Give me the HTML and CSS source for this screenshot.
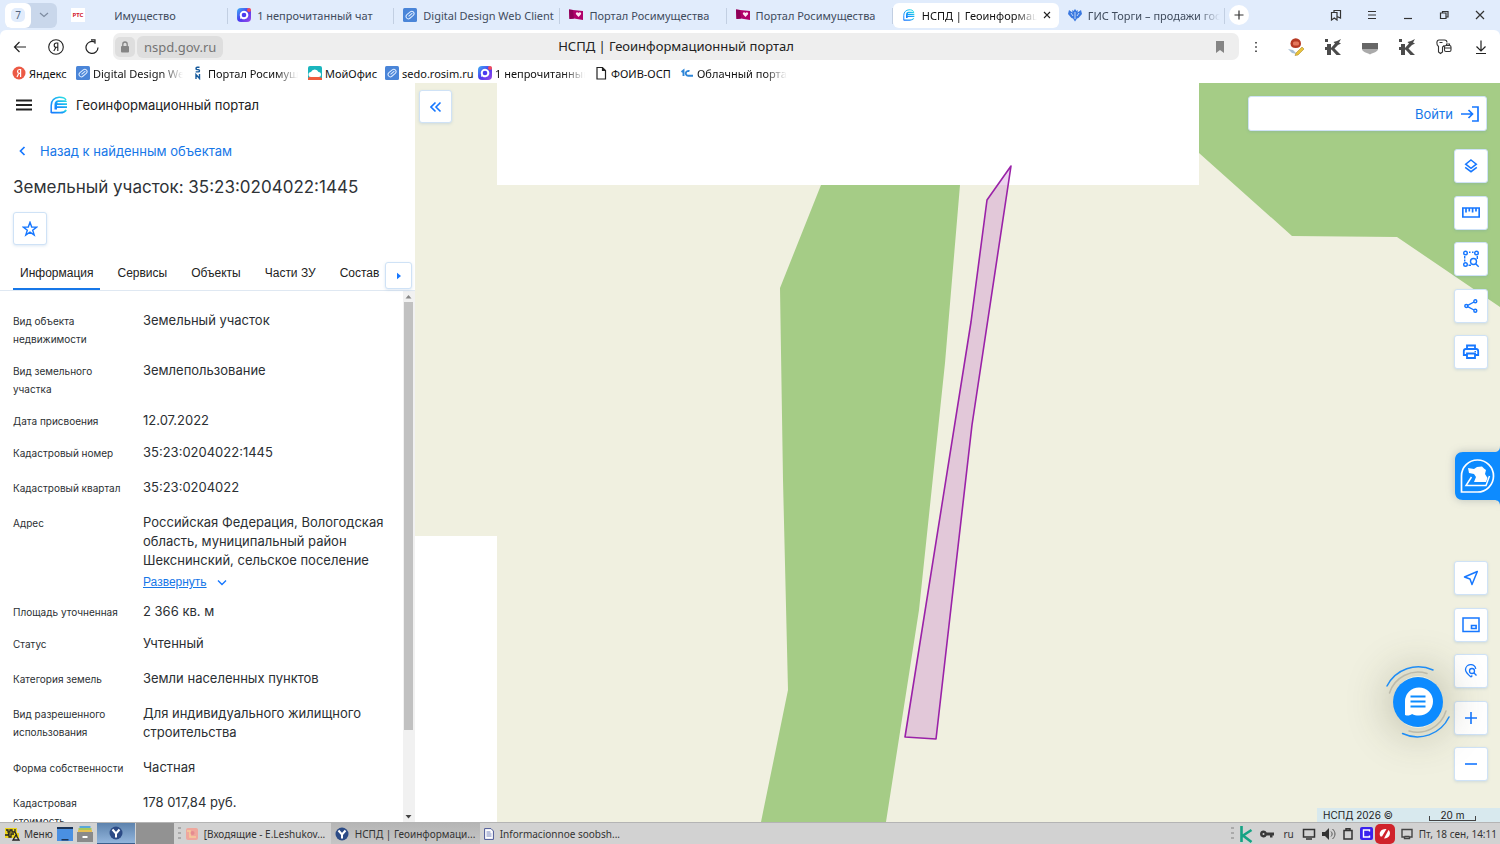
FILE: index.html
```html
<!DOCTYPE html>
<html lang="ru">
<head>
<meta charset="utf-8">
<title>НСПД | Геоинформационный портал</title>
<link rel="stylesheet" href="styles.css">
</head>
<body>
<svg class="defs" aria-hidden="true">
  <defs>
    <linearGradient id="cyan" x1="0" y1="1" x2="1" y2="0"><stop offset="0" stop-color="#1677ff"/><stop offset=".55" stop-color="#17a9f5"/><stop offset="1" stop-color="#2fe6e0"/></linearGradient>
    <linearGradient id="violet" x1="0" y1="0" x2="1" y2="1"><stop offset="0" stop-color="#3cb4f5"/><stop offset=".5" stop-color="#4a3bf0"/><stop offset="1" stop-color="#a04ae8"/></linearGradient>
    <symbol id="nspd" viewBox="0 0 18 18"><path d="M1.200 17V9.500C1.200 4.500 4.500 1.500 9 1.200c4-.2 6 1 7 2.800" fill="none" stroke="url(#cyan)" stroke-width="1.500"/><path d="M1.200 16.700h9c3 0 5-1 6-2.700" fill="none" stroke="url(#cyan)" stroke-width="1.700"/><path d="M4.500 13.500V8.500C4.500 6 6 4.300 8.500 4.300h7.500l1 1.700H7.500v1.200H17v1.800H7v1.200h10v1.800H7v1.500z" fill="url(#cyan)"/></symbol>
    <symbol id="clip" viewBox="0 0 14 14"><rect width="14" height="14" rx="1.500" fill="#4a85d8"/><g transform="rotate(-40 7 7)" fill="none" stroke="#dcebff" stroke-width="1"><rect x="2.500" y="4.800" width="9" height="4.600" rx="2.300"/><path d="M5 7.100h5"/></g></symbol>
    <symbol id="chat" viewBox="0 0 14 14"><rect width="14" height="14" rx="4" fill="url(#violet)"/><path d="M7 2.700a4.300 4.300 0 1 1-2.600 7.700L3 10.800l.2-2A4.300 4.300 0 0 1 7 2.700z" fill="#fff"/><circle cx="7" cy="7" r="2.300" fill="#4a3bf0"/><circle cx="12" cy="2" r="2" fill="#f04a5c"/></symbol>
    <symbol id="rosim" viewBox="0 0 14 14"><path d="M0 1.500l4 .5 10 1v9L5 10.500l-4.500.5z" fill="#b0006a"/><path d="M0 1.500l4 .5 1 8.500-4.500.5z" fill="#8e0057"/><path d="M9.500 9L7 6.300c-.8-1.500 1.300-2.800 2.500-1.200 1.200-1.600 3.300-.3 2.500 1.200z" fill="#ffe6f3"/></symbol>
    <symbol id="kasp" viewBox="0 0 18 18"><path d="M1 1h3v3H1zM3 6h4v4l4-4.500L9.500 4 13 3l4-2-2 3.500 2 1-3 1.500-3.500 3.500L17 17h-4.500L7.500 11.500 7 12v5H3v-5H1V9h2z" fill="#4b4b4b"/></symbol>
    <symbol id="ybird" viewBox="0 0 14 14"><circle cx="7" cy="7" r="6.500" fill="#2c4b86"/><path d="M3.500 3.500L7 7.500v4M10.500 3.500L7 7.500" fill="none" stroke="#fff" stroke-width="2"/></symbol>
  </defs>
</svg>

<header class="browser">
  <div class="tabstrip">
    <div class="group">
      <button class="group-count"><span>7</span></button>
      <button class="group-menu" aria-label="Список вкладок"><svg width="12" height="8" viewBox="0 0 12 8"><path d="M2 2l4 3.500L10 2" fill="none" stroke="#7d8ba0" stroke-width="1.200"/></svg></button>
    </div>
    <div class="tabs">
      <button class="tab"><span class="rts">РТС</span><span class="tab-text">Имущество</span></button>
      <button class="tab"><svg class="fav"><use href="#chat"/></svg><span class="tab-text">1 непрочитанный чат</span></button>
      <button class="tab"><svg class="fav"><use href="#clip"/></svg><span class="tab-text">Digital Design Web Client</span></button>
      <button class="tab"><svg class="fav"><use href="#rosim"/></svg><span class="tab-text">Портал Росимущества</span></button>
      <button class="tab"><svg class="fav"><use href="#rosim"/></svg><span class="tab-text">Портал Росимущества</span></button>
      <button class="tab active"><svg class="fav small"><use href="#nspd"/></svg><span class="tab-text fade">НСПД | Геоинформаци</span><svg width="8" height="8" viewBox="0 0 8 8"><path d="M1 1l6 6M7 1L1 7" stroke="#222" stroke-width="1.100"/></svg></button>
      <button class="tab"><svg class="fav" viewBox="0 0 14 14"><path d="M7 1l1.500 2L10 2l-.5 2.500L13 2l1 4-3.500 4-1.500.5L7 13.500 5 10.500 3.500 10 0 6l1-4 3.500 2.500L4 2l1.500 1z" fill="#3a78e0"/><path d="M7 4v7M3 5l2 3M11 5L9 8" stroke="#e3edfd" stroke-width=".8"/></svg><span class="tab-text fade">ГИС Торги – продажи гос</span></button>
    </div>
    <button class="plus" aria-label="Новая вкладка"><svg width="10" height="10" viewBox="0 0 10 10"><path d="M5 .5v9M.5 5h9" stroke="#333" stroke-width="1.200"/></svg></button>
    <div class="window-buttons">
      <button aria-label="Коллекции"><svg width="12" height="12" viewBox="0 0 12 12"><path d="M1.500 3.500h5.500v7.500L4.300 9 1.500 11zM4 3.500V1.500h6.500V9L7 7.500" fill="none" stroke="#333" stroke-width="1.200"/></svg></button>
      <button aria-label="Меню"><svg width="12" height="12" viewBox="0 0 12 12"><path d="M2 2.500h8M2 6h8M2 9.500h8" stroke="#333" stroke-width="1.200"/></svg></button>
      <button aria-label="Свернуть"><svg width="12" height="12" viewBox="0 0 12 12"><path d="M2 9.500h8" stroke="#333" stroke-width="1.200"/></svg></button>
      <button aria-label="Развернуть окно"><svg width="12" height="12" viewBox="0 0 12 12"><path d="M2.500 4h5.500v5.500H2.500zM4.500 4V2.500h5.500V8H8" fill="none" stroke="#333" stroke-width="1.200"/></svg></button>
      <button aria-label="Закрыть"><svg width="12" height="12" viewBox="0 0 12 12"><path d="M2 2l8 8M10 2l-8 8" stroke="#333" stroke-width="1.200"/></svg></button>
    </div>
  </div>

  <div class="navbar">
    <button class="nav" aria-label="Назад"><svg width="14" height="14" viewBox="0 0 14 14"><path d="M13 7H1.500M6.500 2l-5 5 5 5" fill="none" stroke="#222" stroke-width="1.200"/></svg></button>
    <button class="nav" aria-label="Яндекс"><svg width="16" height="16" viewBox="0 0 16 16"><g fill="none" stroke="#222" stroke-width="1.100"><circle cx="8" cy="8" r="7.300"/><path d="M9.800 12V4H8.300C5.500 4 5.500 8.300 8.300 8.300h1.500M8 8.300L5.800 12"/></g></svg></button>
    <button class="nav" aria-label="Обновить"><svg width="14" height="16" viewBox="0 0 14 16"><path d="M13 8.500A6 6 0 1 1 9.500 3M6 .8h4v4" fill="none" stroke="#222" stroke-width="1.200"/></svg></button>
    <div class="address">
      <span class="lock"><svg width="10" height="12" viewBox="0 0 10 12"><rect x="1" y="5" width="8" height="6.500" rx="1" fill="#858585"/><path d="M2.800 5V3.200a2.200 2.200 0 0 1 4.400 0V5" fill="none" stroke="#858585" stroke-width="1.300"/></svg></span>
      <span class="domain">nspd.gov.ru</span>
      <span class="page-title">НСПД | Геоинформационный портал</span>
      <svg class="mark" width="10" height="12" viewBox="0 0 10 12"><path d="M1 0h8v12L5 9l-4 3z" fill="#858585"/></svg>
    </div>
    <button class="dots" aria-label="Ещё"><svg width="4" height="12" viewBox="0 0 4 12"><path d="M1.200 1h1.600v1.600H1.200zM1.200 5.200h1.600v1.600H1.200zM1.200 9.400h1.600V11H1.200z" fill="#333"/></svg></button>
    <div class="extensions">
      <button aria-label="Подпись"><svg width="18" height="18" viewBox="0 0 18 18"><path d="M3.500 5.500a5 5 0 0 1 10.500 0c0 3-2 4.500-5.300 4.500S3.500 8.500 3.500 5.500z" fill="#b63a24"/><rect x="6" y="3.500" width="6" height="4" rx="1.500" fill="#e4775c"/><path d="M1 11l5 1 4 4-5-1z" fill="#a8bfd4"/><path d="M9 15l6-6 2 2-6 6-3 .5z" fill="#e9c33c" stroke="#a07a18" stroke-width=".5"/></svg></button>
      <button aria-label="Расширение"><svg width="18" height="18"><use href="#kasp"/></svg></button>
      <button aria-label="Щит"><svg width="18" height="18" viewBox="0 0 18 18"><path d="M1 5h16v6H1z" fill="#666"/><path d="M1 11h16c0 3-5 3.500-8 5.500C6 14.500 1 14 1 11z" fill="#aaa"/></svg></button>
      <button aria-label="Расширение 2"><svg width="18" height="18"><use href="#kasp"/></svg></button>
      <button aria-label="Пароли"><svg width="18" height="18" viewBox="0 0 18 18"><g fill="none" stroke="#333" stroke-width="1.100"><path d="M9.500 2H4C1.500 2 1 6.500 3.500 8.500v5.500l2 1.500 2-1.500V9c1-.5 1.500-1 1.800-1.800M9.500 2c2 0 2.500 1.500 2.500 2.500M4.500 4.500h3"/><rect x="9.500" y="7.500" width="6.500" height="6" rx="1.500"/><path d="M9.500 10H16M11.500 7.500V6h3v1.500"/></g></svg></button>
      <button aria-label="Загрузки"><svg width="18" height="18" viewBox="0 0 18 18"><path d="M9 2.500v10M4.500 8.500L9 13l4.500-4.500M4 15.500h10" fill="none" stroke="#222" stroke-width="1.200"/></svg></button>
    </div>
  </div>

  <nav class="bookmarks">
    <a href="#" class="bm b1"><svg class="fav" viewBox="0 0 14 14"><circle cx="7" cy="7" r="6.500" fill="#ec5a45"/><path d="M8.600 11V3.500H7.300C5 3.500 5 7.300 7.300 7.300h1.300M6.800 7.300L5 11" fill="none" stroke="#fff" stroke-width="1.200"/></svg><span>Яндекс</span></a>
    <a href="#" class="bm b2"><svg class="fav"><use href="#clip"/></svg><span class="fade">Digital Design Web</span></a>
    <a href="#" class="bm b3"><svg class="fav" viewBox="0 0 14 14"><path d="M8.500 1.300H6.200c-1.600 0-1.600 2.300 0 2.300h1.100c1.600 0 1.600 2.300 0 2.300H4.700M5 13V8.500l3.500 4V8" fill="none" stroke="#165a9c" stroke-width="1.400"/></svg><span class="fade">Портал Росимущ</span></a>
    <a href="#" class="bm b4"><svg class="fav" viewBox="0 0 14 14"><rect width="14" height="14" rx="2" fill="#1ab5bd"/><path d="M0 12l5-4 9 4v2H0z" fill="#ef5b3d"/><path d="M3 11a2.500 2.500 0 0 1 0-5 4 4 0 0 1 7.500 0 2.500 2.500 0 0 1 0 5z" fill="#fff"/></svg><span>МойОфис</span></a>
    <a href="#" class="bm b5"><svg class="fav"><use href="#clip"/></svg><span>sedo.rosim.ru</span></a>
    <a href="#" class="bm b6"><svg class="fav"><use href="#chat"/></svg><span class="fade">1 непрочитанный</span></a>
    <a href="#" class="bm b7"><svg class="fav" viewBox="0 0 14 14"><path d="M3 1.500h5.500l3 3V13H3zM8.500 1.500v3h3" fill="none" stroke="#222" stroke-width="1.200"/></svg><span>ФОИВ-ОСП</span></a>
    <a href="#" class="bm b8"><svg class="fav" viewBox="0 0 14 14"><path d="M1.500 6l2-1.500V10M9.500 5.200a2.600 2.400 0 1 0-.5 4.500h4" fill="none" stroke="#2f86d8" stroke-width="1.900"/></svg><span class="fade">Облачный портал</span></a>
  </nav>
</header>

<main class="app">
  <aside class="panel">
    <div class="brand">
      <button class="burger" aria-label="Меню портала"><svg width="16" height="12" viewBox="0 0 16 12"><path d="M0 1.500h16M0 6h16M0 10.500h16" stroke="#222" stroke-width="1.800"/></svg></button>
      <svg width="18" height="18"><use href="#nspd"/></svg>
      <span>Геоинформационный портал</span>
    </div>
    <a href="#" class="back"><svg width="7" height="10" viewBox="0 0 7 10"><path d="M5.500 1l-4 4 4 4" fill="none" stroke="#1677ff" stroke-width="1.700"/></svg><span>Назад к найденным объектам</span></a>
    <h1>Земельный участок: 35:23:0204022:1445</h1>
    <button class="box star" aria-label="В избранное"><svg width="16" height="16" viewBox="0 0 16 16"><path d="M8 1.300l1.700 4.700 5 .1-4 3.100 1.500 4.900L8 11.200l-4.200 2.900 1.500-4.900-4-3.100 5-.1z" fill="none" stroke="#1677ff" stroke-width="1.400"/></svg></button>
    <div class="sections">
      <button class="section current">Информация</button>
      <button class="section">Сервисы</button>
      <button class="section">Объекты</button>
      <button class="section">Части ЗУ</button>
      <button class="section">Состав</button>
      <button class="box next" aria-label="Далее"><svg width="6" height="8" viewBox="0 0 6 8"><path d="M1 .8v6.400L5 4z" fill="#1677ff"/></svg></button>
    </div>
    <div class="content">
      <dl class="facts">
        <div class="row"><dt>Вид объекта недвижимости</dt><dd>Земельный участок</dd></div>
        <div class="row"><dt>Вид земельного участка</dt><dd>Землепользование</dd></div>
        <div class="row"><dt>Дата присвоения</dt><dd>12.07.2022</dd></div>
        <div class="row roomy"><dt>Кадастровый номер</dt><dd>35:23:0204022:1445</dd></div>
        <div class="row roomy"><dt>Кадастровый квартал</dt><dd>35:23:0204022</dd></div>
        <div class="row roomy"><dt>Адрес</dt><dd>Российская Федерация, Вологодская область, муниципальный район Шекснинский, сельское поселение<a href="#" class="expand"><span>Развернуть</span><svg width="10" height="7" viewBox="0 0 10 7"><path d="M1 1.500l4 4 4-4" fill="none" stroke="#1677ff" stroke-width="1.400"/></svg></a></dd></div>
        <div class="row"><dt>Площадь уточненная</dt><dd>2 366 кв. м</dd></div>
        <div class="row roomy"><dt>Статус</dt><dd>Учтенный</dd></div>
        <div class="row roomy"><dt>Категория земель</dt><dd>Земли населенных пунктов</dd></div>
        <div class="row roomy"><dt>Вид разрешенного использования</dt><dd>Для индивидуального жилищного строительства</dd></div>
        <div class="row roomy"><dt>Форма собственности</dt><dd>Частная</dd></div>
        <div class="row roomy"><dt>Кадастровая стоимость</dt><dd>178 017,84 руб.</dd></div>
      </dl>
      <div class="scroll" aria-hidden="true">
        <svg width="11" height="11" viewBox="0 0 11 11"><path d="M5.500 4L8.500 7.500h-6z" fill="#888"/></svg>
        <div class="track"><div class="thumb"></div></div>
        <svg width="11" height="11" viewBox="0 0 11 11"><path d="M5.500 7.500L8.500 4h-6z" fill="#444"/></svg>
      </div>
    </div>
  </aside>

  <section class="map">
    <svg class="ground" viewBox="415 83 1085 739" preserveAspectRatio="xMidYMid slice">
      <path d="M415 83h1085v739H415z" fill="#f0f0e0"/>
      <path d="M497 83h702v102H497zM415 536h82v286h-82z" fill="#fff"/>
      <path d="M1199 83h301v224L1397 237l-105-1-93-83zM821 185h139l-15 178-26 247-33 212H761l27-132-5-210-3-192z" fill="#a5cc86"/>
      <path d="M1011 166l-24 34-16 122-66 415 31 2 16-140 20-174z" fill="#c060c8" fill-opacity=".28" stroke="#9a22a8" stroke-width="1.600" stroke-linejoin="round"/>
    </svg>
    <button class="box collapse" aria-label="Скрыть панель"><svg width="12" height="12" viewBox="0 0 12 12"><path d="M5.500 1.500L1 6l4.500 4.500M10.500 1.500L6 6l4.500 4.500" fill="none" stroke="#1677ff" stroke-width="1.600"/></svg></button>
    <button class="box login"><span>Войти</span><svg width="18" height="16" viewBox="0 0 18 16"><path d="M11 1h6v14h-6M0 8h11M7.500 4L11.500 8l-4 4" fill="none" stroke="#1677ff" stroke-width="1.700"/></svg></button>
    <div class="tools top">
      <button class="box" aria-label="Слои"><svg width="14" height="14" viewBox="0 0 14 14"><path d="M7 1l5.300 4.200L7 9.300 1.700 5.200zM1.200 8.300L7 12.700l5.800-4.400" fill="none" stroke="#1677ff" stroke-width="1.500"/></svg></button>
      <button class="box" aria-label="Измерения"><svg width="18" height="11" viewBox="0 0 18 11"><path d="M.8 1h16.400v9H.8zM4 1v4.500M7.300 1v3.500M10.600 1v4.500M14 1v3.500" fill="none" stroke="#1677ff" stroke-width="1.700"/></svg></button>
      <button class="box" aria-label="Поиск в области"><svg width="18" height="18" viewBox="0 0 18 18"><g fill="none" stroke="#1677ff" stroke-width="1.400"><circle cx="3.500" cy="3" r="1.800"/><circle cx="14.500" cy="3" r="1.800"/><circle cx="3.500" cy="14.500" r="1.800"/><circle cx="11.500" cy="11.500" r="3"/><path d="M13.700 13.700l3 3M2.700 6v2.500M2.700 9.500v2M7 2.200h1.500M10 2.200h1.500M15.300 6v3M6.500 15.300H9"/></g></svg></button>
      <button class="box" aria-label="Поделиться"><svg width="14" height="14" viewBox="0 0 14 14"><g fill="none" stroke="#1677ff" stroke-width="1.400"><circle cx="2.300" cy="7" r="1.500"/><circle cx="11.300" cy="2.300" r="1.500"/><circle cx="11.300" cy="11.700" r="1.500"/><path d="M3.700 6.300L10 3M3.700 7.700L10 11"/></g></svg></button>
      <button class="box" aria-label="Печать"><svg width="18" height="18" viewBox="0 0 18 18"><path d="M5 6V2.500h8V6M5 12H1.800V8.200c0-1.300.7-2.200 2.200-2.200h10c1.500 0 2.200.9 2.200 2.200V12H13M5 10.500h8V15H5z" fill="none" stroke="#1677ff" stroke-width="1.800"/><path d="M12.500 8.500H14" stroke="#1677ff"/></svg></button>
    </div>
    <button class="helper" aria-label="Помощник">
      <svg width="46" height="60" viewBox="0 0 46 60"><path d="M46 0v60c0-4-2-6-6-6H9c-5 0-8-3-8-8V14c0-5 3-8 8-8h31c4 0 6-2 6-6z" fill="#0d8bff"/><path d="M7.500 46V30A16 16 0 1 1 23.500 46z" fill="none" stroke="#fff" stroke-width="1.700"/><path d="M14 22l6 1 3-2 5-.5 2 2 2 1.500-1 4 2.500 4-1.500 4h-12l2-5-2-3-5-1z" fill="#fff"/><path d="M17.500 31l-5.500 8.500h20L35.500 30" fill="none" stroke="#fff" stroke-width="1.500"/></svg>
    </button>
    <div class="tools bottom">
      <button class="box" aria-label="Моё местоположение"><svg width="16" height="16" viewBox="0 0 16 16"><path d="M14.300 1.500L1.500 7l5.500 2 2 5.500z" fill="none" stroke="#1677ff" stroke-width="1.500" stroke-linejoin="round"/></svg></button>
      <button class="box" aria-label="Обзорная карта"><svg width="18" height="16" viewBox="0 0 18 16"><path d="M1 1h16v13.500H1z" fill="none" stroke="#1677ff" stroke-width="1.500"/><path d="M9.500 8.500h4.600v3H9.500z" fill="none" stroke="#1677ff" stroke-width="1.600"/></svg></button>
      <button class="box" aria-label="Поиск места"><svg width="14" height="14" viewBox="0 0 14 14"><g fill="none" stroke="#1677ff" stroke-width="1.300"><path d="M7 13C4 10.500 1.500 8 1.500 5.800a5.200 5.200 0 0 1 10.300-1M7 13l1.300-1.500"/><circle cx="8" cy="7" r="2.500"/><path d="M9.800 8.800l2.700 2.700"/></g></svg></button>
      <button class="box" aria-label="Приблизить"><svg width="12" height="12" viewBox="0 0 12 12"><path d="M6 0v12M0 6h12" stroke="#1677ff" stroke-width="1.600"/></svg></button>
      <button class="box" aria-label="Отдалить"><svg width="12" height="12" viewBox="0 0 12 12"><path d="M0 6h12" stroke="#1677ff" stroke-width="1.600"/></svg></button>
    </div>
    <button class="support" aria-label="Чат поддержки">
      <svg width="72" height="76" viewBox="0 0 72 76"><circle cx="36" cy="38" r="25" fill="#0d8bff"/><path d="M23 51V37.500A14 14 0 1 1 37 51.500c-3 0-5-.5-7-1.500-2 1.500-4 2-7 1z" fill="#fff"/><path d="M28.500 32.500h15M28.500 37.500h15M28.500 42.500h15" stroke="#0d8bff" stroke-width="1.800"/><g fill="none" stroke-width="1.500" stroke-linecap="round"><path d="M5 22A35 35 0 0 1 51 6M67 53A35 35 0 0 1 20.500 69.500" stroke="#1f8df5"/><path d="M7.500 29A30 30 0 0 1 45 9.500M64 47A30 30 0 0 1 27 67" stroke="#bdbbab"/></g></svg>
    </button>
    <div class="credits"><span>НСПД 2026 ©</span><span class="scale">20 m</span></div>
  </section>
</main>

<footer class="taskbar">
  <button class="menu"><svg width="16" height="14" viewBox="0 0 16 14"><path d="M1 1h12v5h2v5H1z" fill="#ecd51c"/><path d="M2 3h2v2h2V3h2v2h3V2M1 8h3l1-2v4h2V7h3M9 13l3-5 3 5zM11 5l2 4" fill="none" stroke="#222" stroke-width="1.300"/></svg><span>Меню</span></button>
  <button class="launch" aria-label="Рабочий стол"><svg width="16" height="14" viewBox="0 0 16 14"><path d="M0 0h16v14H0z" fill="#4a90e2"/><path d="M0 0h16v2H0zM4.500 12h7v1.500h-7z" fill="#1d3557"/></svg></button>
  <button class="launch" aria-label="Файлы"><svg width="16" height="16" viewBox="0 0 16 16"><path d="M2.500 0h11v2h-11z" fill="#58a8d8"/><path d="M1.500 2h13v2h-13z" fill="#a8c85c"/><path d="M1 4h14v2H1z" fill="#e6c054"/><path d="M0 6h16v10H0z" fill="#8a8a8a"/><path d="M5.500 10h5v2h-5z" fill="#fff"/></svg></button>
  <button class="desk on" aria-label="Рабочее место 1"><svg width="14" height="14"><use href="#ybird"/></svg></button>
  <button class="desk" aria-label="Рабочее место 2"></button>
  <i class="grip"></i>
  <button class="task"><svg width="12" height="12" viewBox="0 0 12 12"><rect width="12" height="12" rx="2" fill="#efa79d"/><path d="M1 3h3v6h6" fill="none" stroke="#f6cf9a" stroke-width="1.500"/><circle cx="6.500" cy="5" r="2" fill="#e58c90"/></svg><span>[Входящие - E.Leshukov...</span></button>
  <button class="task current"><svg width="14" height="14"><use href="#ybird"/></svg><span>НСПД | Геоинформаци...</span></button>
  <button class="task"><svg width="10" height="12" viewBox="0 0 10 12"><path d="M.6.6H7L9.400 3v8.400H.6z" fill="#fff" stroke="#4a5796"/><path d="M2.500 4h4M2.500 6h5M2.500 8h5" stroke="#7986bd"/></svg><span>Informacionnoe soobsh...</span></button>
  <div class="tray">
    <i class="grip"></i>
    <svg width="13" height="18" viewBox="0 0 13 18"><path d="M1.500 1v16M11.500 5L3 10.500 11.500 17" fill="none" stroke="#16a384" stroke-width="2.600"/></svg>
    <svg width="16" height="12" viewBox="0 0 16 12"><path d="M4.500 2.500a3.500 3.500 0 1 0 3.200 5H11v2h2.500v-2H15v-3H7.700a3.500 3.500 0 0 0-3.200-2zM4.500 5a1 1 0 1 1 0 2 1 1 0 0 1 0-2z" fill="#3a3a3a" fill-rule="evenodd"/></svg>
    <span class="lang">ru</span>
    <svg width="14" height="12" viewBox="0 0 14 12"><path d="M1.500 1.500h11v7.500h-11zM4 11h6" fill="none" stroke="#333" stroke-width="1.500"/></svg>
    <svg width="14" height="12" viewBox="0 0 14 12"><path d="M0 4h3l4-4v12L3 8H0z" fill="#333"/><path d="M9 3.500c1.500 1.500 1.500 3.500 0 5M10.500 1c3.300 3 3.300 7 0 10" fill="none" stroke="#555"/></svg>
    <svg width="12" height="12" viewBox="0 0 12 12"><path d="M2 2.500h8V11H2zM4 2V.8h4V2" fill="none" stroke="#333" stroke-width="1.500"/></svg>
    <div class="apps">
      <svg width="13" height="13" viewBox="0 0 13 13"><rect width="13" height="13" rx="2" fill="#3a22ee"/><path d="M9.500 4.500V3H3.500v7h6V8.500" fill="none" stroke="#fff" stroke-width="1.400"/></svg>
      <svg width="20" height="20" viewBox="0 0 20 20"><rect width="20" height="20" rx="5" fill="#d0232b"/><path d="M5.500 12.500c-2-3 0-7.500 5-7.500h1L7 12.500zM9 14.500L13.500 6c3 2.500 1.500 8.500-4.500 8.500z" fill="#fff"/></svg>
    </div>
    <svg width="12" height="12" viewBox="0 0 12 12"><path d="M1 1.500h10V9H8.500v1.500h-5V9H1zM3.500 8.500h5" fill="none" stroke="#444" stroke-width="1.400"/></svg>
    <time>Пт, 18 сен, 14:11</time>
  </div>
</footer>
</body>
</html>
```
FILE: styles.css
```css
* { box-sizing: border-box; }
body { margin: 0; height: 100vh; display: flex; flex-direction: column; overflow: hidden; font-family: Inter, "Liberation Sans", sans-serif; color: #2b2f33; background: #fff; }
button { font: inherit; color: inherit; border: 0; padding: 0; margin: 0; background: none; display: flex; align-items: center; justify-content: center; }
a { color: inherit; text-decoration: none; }
svg { flex: none; display: block; }
.defs { position: absolute; width: 0; height: 0; }

/* browser chrome */
.browser { flex: none; font-family: "Noto Sans", sans-serif; font-size: 11px; background: #e1ecfc; }
.tabstrip { display: flex; align-items: center; height: 30px; padding: 0 5px; }
.group { display: flex; width: 52px; height: 25px; border-radius: 6px; background: #c9d7eb; margin-right: 5px; }
.group-count { width: 26px; border-radius: 6px; background: #fff; color: #52647e; font-size: 10px; }
.group-count span { background: #e1ecfc; border-radius: 5px; width: 14px; line-height: 14px; }
.group-menu { width: 26px; }
.tabs { display: flex; flex: 0 1 1163px; min-width: 0; }
.tab { flex: 1; min-width: 0; height: 25px; padding-left: 9px; gap: 6px; justify-content: flex-start; color: #3f4b5c; position: relative; }
.tab:not(.active)::after { content: ""; position: absolute; right: 0; top: 5px; height: 16px; width: 1px; background: #c2cfe2; }
.fav { width: 14px; height: 14px; }
.fav.small { width: 12px; height: 12px; margin: 0 1px; }
.rts { width: 14px; height: 14px; background: #fff; color: #d3202f; font-size: 6px; font-weight: 700; line-height: 14px; }
.tab-text { min-width: 108px; text-align: center; white-space: nowrap; }
.tab.active { background: #fff; border-radius: 6px; color: #111; }
.tab.active .tab-text { width: 115px; }
.fade { white-space: nowrap; text-align: left; -webkit-mask-image: linear-gradient(to left, transparent, #000 22px); mask-image: linear-gradient(to left, transparent, #000 22px); }
.plus { flex: none; width: 20px; height: 20px; border-radius: 10px; background: #fff; margin-left: 4px; }
.window-buttons { display: flex; margin-left: auto; gap: 12px; padding-right: 3px; }
.window-buttons button { width: 24px; height: 24px; }

.navbar { display: flex; align-items: center; height: 33px; padding: 0 9px 0 7px; background: #fff; border-radius: 6px 6px 0 0; }
.nav { width: 26px; height: 26px; margin-right: 10px; }
.address { flex: 1; display: flex; align-items: center; height: 27px; padding: 0 14px 0 2px; gap: 2px; border-radius: 7px; background: #eee; font-size: 13px; margin-left: -2px; position: relative; }
.lock { width: 20px; height: 20px; border-radius: 5px; background: #dedede; display: flex; align-items: center; justify-content: center; }
.domain { padding: 0 7px; line-height: 22px; border-radius: 6px; background: #dedede; color: #747474; }
.page-title { position: absolute; inset: 0; line-height: 27px; text-align: center; color: #222; pointer-events: none; }
.mark { margin-left: auto; }
.dots { width: 16px; height: 24px; margin: 0 22px 0 9px; }
.extensions { display: flex; gap: 17px; }
.extensions button { width: 20px; height: 20px; }

.bookmarks { display: flex; align-items: center; height: 20px; padding-left: 12px; background: #fff; color: #111; }
.bm { display: flex; align-items: center; gap: 3px; white-space: nowrap; flex: none; }
.bm .fade { width: 90px; }
.b1 { width: 64px; }
.b2 { width: 115px; }
.b3 { width: 117px; }
.b4 { width: 77px; }
.b5 { width: 93px; }
.b6 { width: 116px; }
.b7 { width: 86px; }
.b8 { width: 106px; }

/* object card */
.app { flex: 1; min-height: 0; display: flex; }
.panel { flex: 0 0 415px; display: flex; flex-direction: column; min-height: 0; background: #fff; }
.brand { display: flex; align-items: center; height: 44px; padding-left: 16px; font-size: 13px; color: #222; }
.brand > svg { margin: 0 8px 0 18px; }
.back { display: flex; align-items: center; gap: 14px; height: 48px; padding-left: 19px; font-size: 13px; color: #1677e8; }
h1 { margin: 0; padding-left: 13px; font-size: 17px; line-height: 24px; font-weight: 400; color: #2f3337; }
.box { background: #fff; border: 1px solid #cfe2f6; border-radius: 3px; box-shadow: 0 1px 3px rgba(60, 120, 190, .18); }
.star { width: 34px; height: 33px; margin: 13px 0 0 13px; }
.sections { display: flex; align-items: stretch; gap: 10px; height: 36px; margin-top: 10px; padding-left: 13px; border-bottom: 1px solid #dfe8f2; font-family: "Liberation Sans", sans-serif; font-size: 12px; color: #222; position: relative; }
.section { padding: 2px 7px 0; border-bottom: 2px solid transparent; }
.section.current { border-color: #1677e8; }
.next { position: absolute; right: 3px; bottom: 1px; width: 27px; height: 27px; }
.content { flex: 1; min-height: 0; display: flex; overflow: hidden; }
.facts { flex: 1; margin: 0; padding: 20px 10px 0 13px; }
.row { display: grid; grid-template-columns: 118px 1fr; column-gap: 12px; align-items: baseline; line-height: 19px; margin-bottom: 13px; }
.row.roomy { margin-bottom: 16px; }
dt { font-size: 10px; line-height: 18px; }
dd { margin: 0; font-size: 13px; }
.expand { display: flex; align-items: center; gap: 10px; height: 24px; margin-bottom: -8px; font: 12px "Liberation Sans", sans-serif; color: #1677e8; }
.expand span { text-decoration: underline; }
.scroll { width: 12px; display: flex; flex-direction: column; background: #f1f1f1; }
.track { flex: 1; display: flex; flex-direction: column; padding: 0 2px 0 1px; }
.thumb { flex: 0 0 84%; background: #c1c1c1; }

/* map */
.map { flex: 1; min-width: 0; position: relative; overflow: hidden; color: #1677e8; }
.ground { position: absolute; inset: 0; width: 100%; height: 100%; }
.collapse { position: absolute; left: 4px; top: 7px; width: 33px; height: 33px; }
.login { position: absolute; right: 13px; top: 13px; width: 239px; height: 35px; padding-right: 7px; gap: 8px; justify-content: flex-end; font-size: 13px; }
.tools { position: absolute; right: 12px; height: 220px; display: flex; flex-direction: column; justify-content: space-between; }
.tools .box { width: 34px; height: 34px; }
.tools.top { top: 66px; }
.tools.bottom { bottom: 41px; }
.helper { position: absolute; right: 0; top: 363px; filter: drop-shadow(0 0 4px rgba(60, 80, 100, .3)); }
.support { position: absolute; right: 46px; bottom: 82px; }
.support::before { content: ""; position: absolute; inset: 12px; border-radius: 50%; box-shadow: 0 0 40px 8px rgba(70, 70, 40, .25); }
.support svg { position: relative; }
.credits { position: absolute; right: 0; bottom: 0; width: 183px; display: flex; align-items: center; justify-content: space-between; padding: 0 24px 0 6px; background: #d8e9ee; color: #222; font-size: 10px; line-height: 14px; }
.scale { width: 47px; line-height: 12px; text-align: center; position: relative; }
.scale::after { content: ""; position: absolute; inset: 7px 0 0; border: 1px solid #444; border-top: 0; }

/* desktop bar */
.taskbar { flex: none; display: flex; align-items: center; height: 22px; background: #d2d2d2; border-top: 1px solid #b4b4b4; padding: 0 3px 0 4px; font-family: "Noto Sans", sans-serif; font-size: 10px; color: #333; }
.menu { gap: 4px; margin-right: 4px; }
.launch { width: 16px; margin-right: 4px; }
.desk { width: 38px; height: 22px; background: #929292; }
.desk.on { background: linear-gradient(#5d83ad, #92b5dc); border-bottom: 2px solid #3a5f8c; margin-right: 1px; }
.grip { width: 3px; height: 14px; margin: 0 1px 0 4px; background: repeating-linear-gradient(#aaa 0 2px, transparent 2px 5px); }
.task { width: 149px; height: 22px; padding: 0 4px; gap: 6px; justify-content: flex-start; white-space: nowrap; }
.task.current { background: linear-gradient(#b5b5b5, #c6c6c6); }
.tray { margin-left: auto; display: flex; align-items: center; gap: 6px; }
.tray .grip { margin: 0; }
.apps { display: flex; align-items: center; gap: 2px; }
.lang { margin: 0 2px; }
```
